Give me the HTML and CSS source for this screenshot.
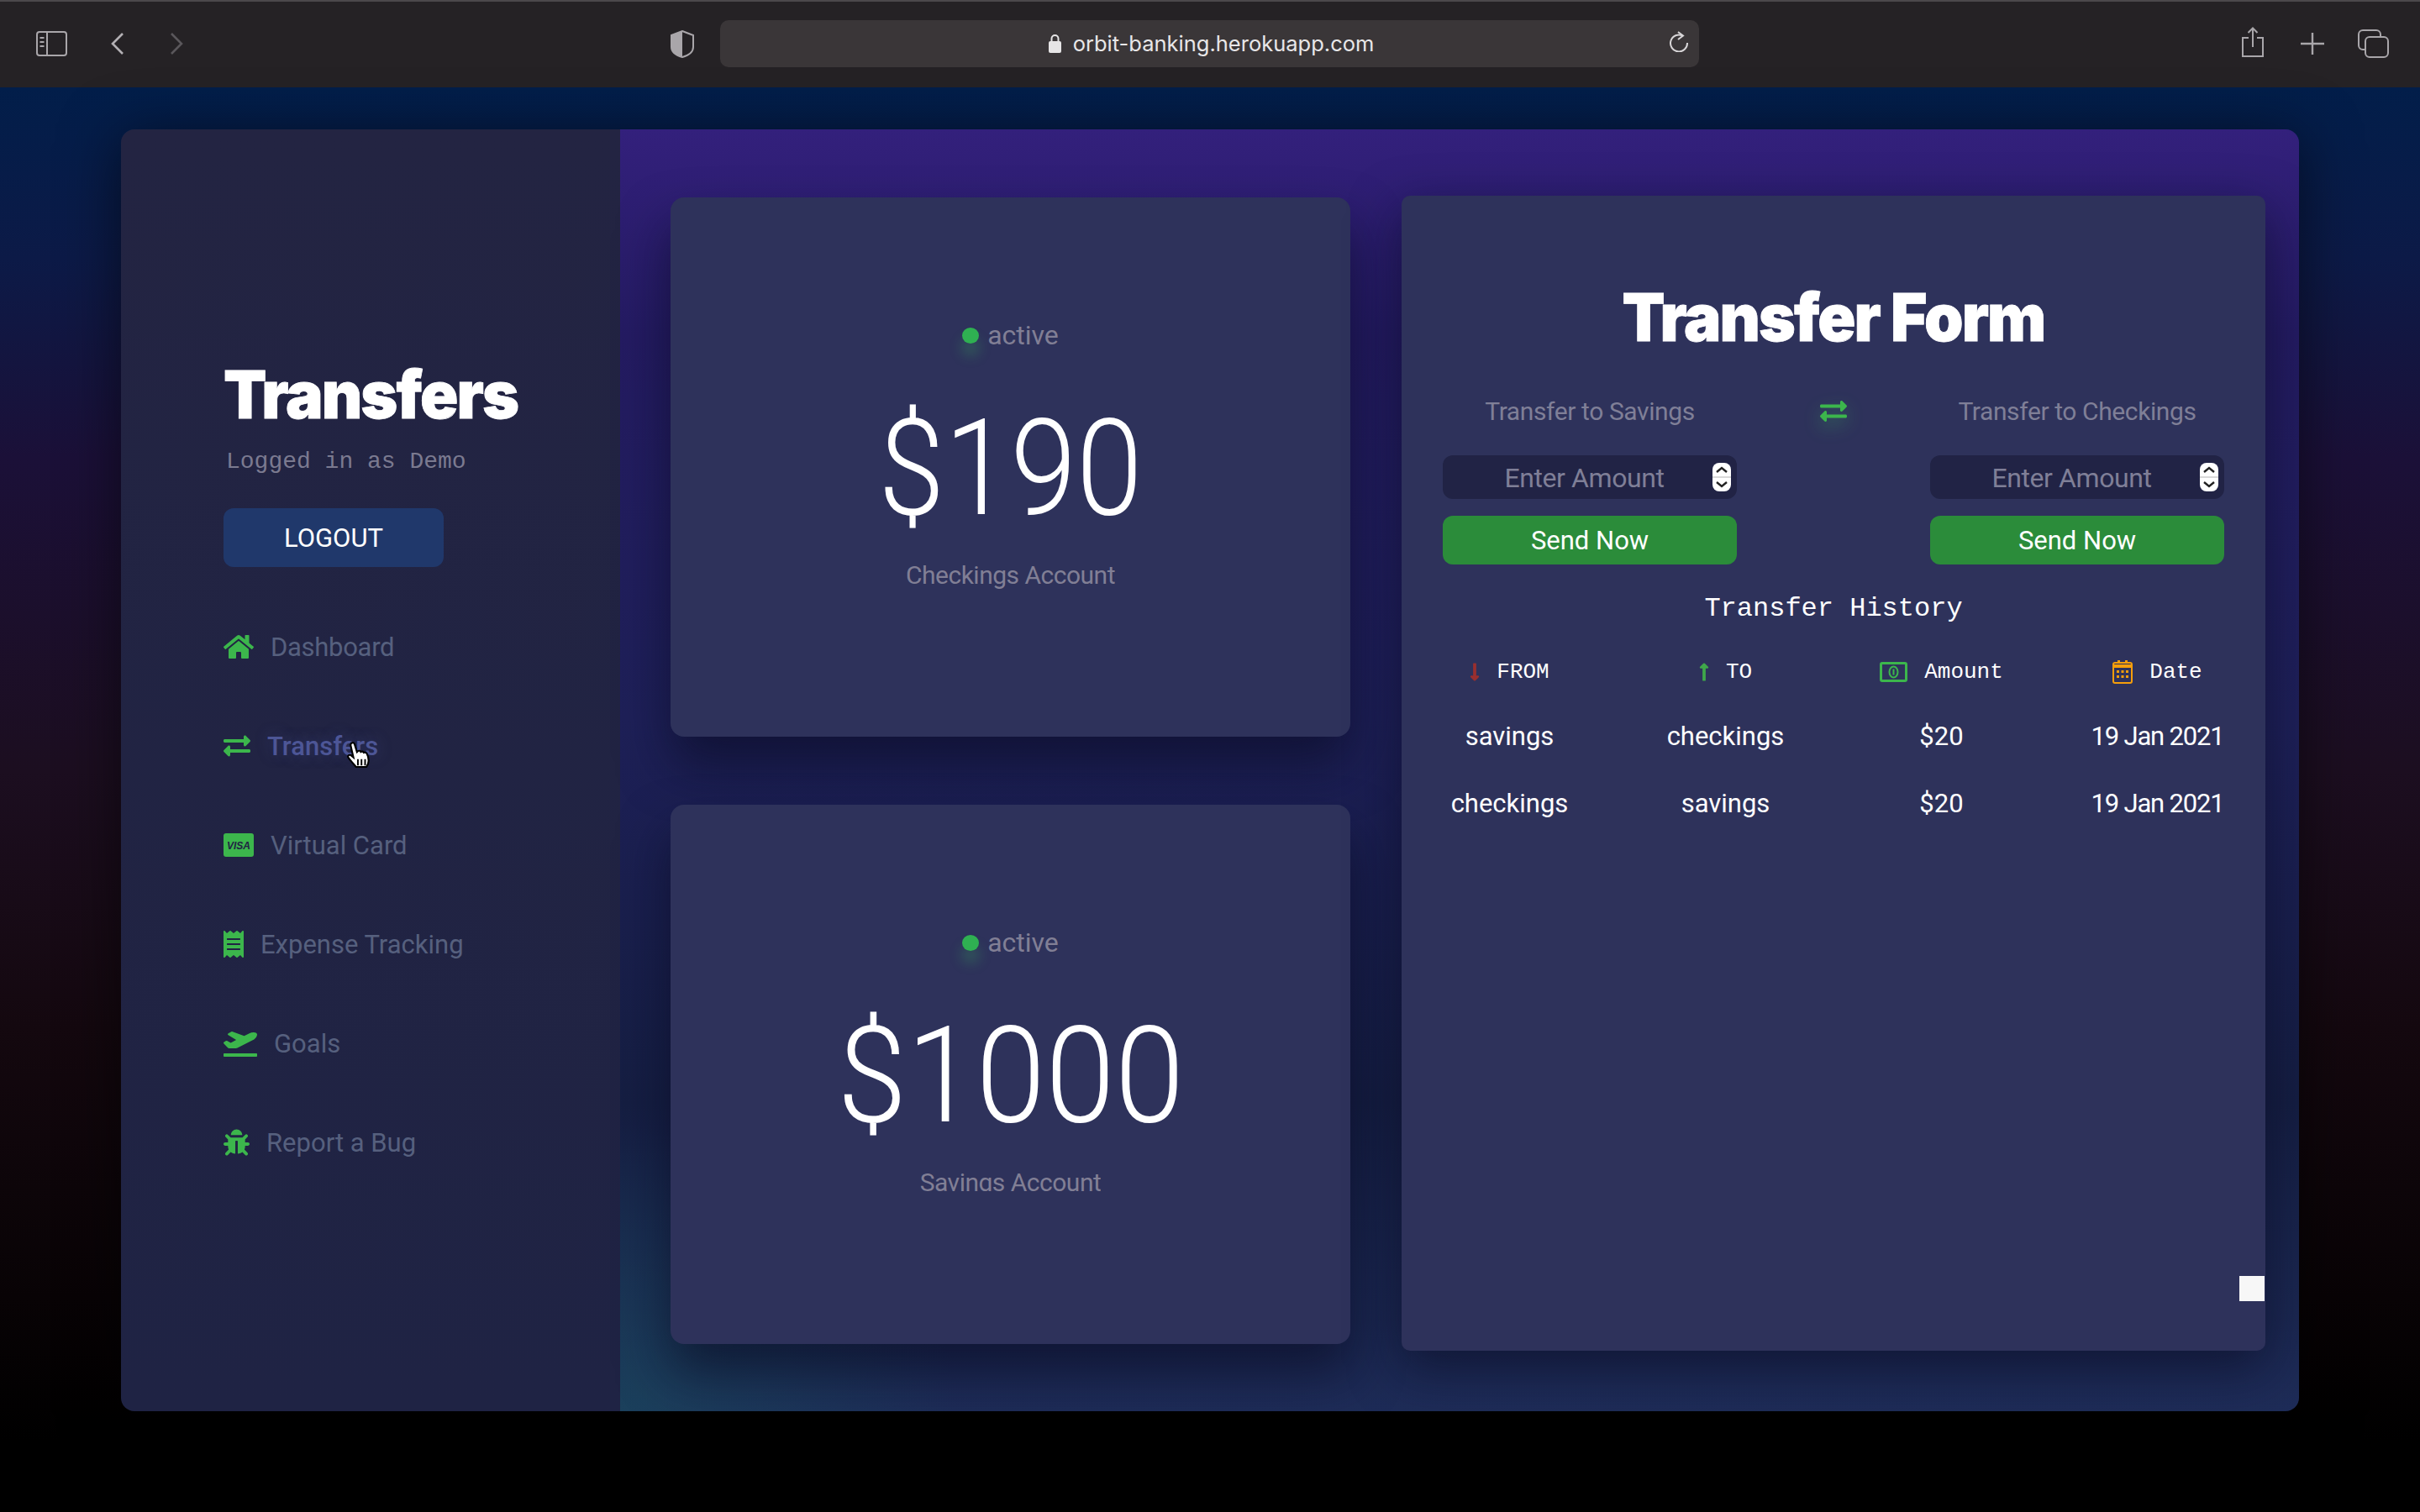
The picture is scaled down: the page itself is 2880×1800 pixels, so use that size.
FILE: index.html
```html
<!DOCTYPE html>
<html lang="en">
<head>
  <meta charset="UTF-8">
  <meta name="viewport" content="width=device-width, initial-scale=1.0">
  <title>Transfers</title>
  <link rel="stylesheet" href="styles.css">
</head>
<body>
  <header class="toolbar">
    <svg class="tb-sidebar" viewBox="0 0 37 30"><rect x="1" y="1" width="35" height="28" rx="3" fill="none" stroke="#a9a6aa" stroke-width="2"/><path d="M13 1v28" stroke="#a9a6aa" stroke-width="2"/><path d="M4.500 8h5M4.500 13h5M4.500 18h5" stroke="#a9a6aa" stroke-width="2"/></svg>
    <svg class="tb-back" viewBox="0 0 17 28"><path d="M15 2 3 14l12 12" fill="none" stroke="#b3b0b4" stroke-width="2.600"/></svg>
    <svg class="tb-forward" viewBox="0 0 17 28"><path d="m2 2 12 12L2 26" fill="none" stroke="#5a575b" stroke-width="2.600"/></svg>
    <svg class="tb-shield" viewBox="0 0 28 33"><path d="M14 1 27 6v14c0 6-6 10-13 12C7 30 1 26 1 20V6z" fill="none" stroke="#a9a6aa" stroke-width="2"/><path d="M14 1v31C7 30 1 26 1 20V6z" fill="#a9a6aa"/></svg>
    <div class="address">
      <span class="address-text">
        <svg class="tb-lock" viewBox="0 0 15 23"><path d="M3.500 10V6a4 4 0 0 1 8 0v4" fill="none" stroke="#e6e5e6" stroke-width="2"/><rect y="9" width="15" height="14" rx="2" fill="#e6e5e6"/></svg>
        orbit-banking.herokuapp.com
      </span>
      <svg class="tb-reload" viewBox="0 0 24 25"><path d="M16.500 5.500A10 10 0 1 0 22 14" fill="none" stroke="#d8d6d8" stroke-width="2"/><path d="m11 1 6 4.500-6 4.500" fill="none" stroke="#d8d6d8" stroke-width="2"/></svg>
    </div>
    <div class="tb-right">
      <svg class="tb-share" viewBox="0 0 28 37"><path d="M9 13H2v22h24V13h-7" fill="none" stroke="#a9a6aa" stroke-width="2"/><path d="M14 24V2M8.500 7 14 1.500 19.500 7" fill="none" stroke="#a9a6aa" stroke-width="2"/></svg>
      <svg class="tb-plus" viewBox="0 0 28 26"><path d="M14 0v26M0 13h28" stroke="#a9a6aa" stroke-width="2.400"/></svg>
      <svg class="tb-tabs" viewBox="0 0 37 34"><rect x="1" y="1" width="26" height="23" rx="5" fill="none" stroke="#a9a6aa" stroke-width="2"/><rect x="9" y="9" width="27" height="24" rx="5" fill="#252225" stroke="#a9a6aa" stroke-width="2"/></svg>
    </div>
  </header>

  <div class="page">
    <div class="app">
      <aside class="sidebar">
        <h1 class="side-title">Transfers</h1>
        <p class="logged">Logged in as Demo</p>
        <button class="logout">LOGOUT</button>
        <nav class="nav">
          <a class="nav-item">
            <svg class="nav-icon ic-home" viewBox="0 0 576 512"><path d="M280.370 148.260L96 300.110V464a16 16 0 0 0 16 16l112.060-.29a16 16 0 0 0 15.920-16V368a16 16 0 0 1 16-16h64a16 16 0 0 1 16 16v95.640a16 16 0 0 0 16 16.050L464 480a16 16 0 0 0 16-16V300L295.670 148.260a12.190 12.190 0 0 0-15.300 0zM571.600 251.470L488 182.560V44.050a12 12 0 0 0-12-12h-56a12 12 0 0 0-12 12v72.610L318.470 43a48 48 0 0 0-61 0L4.340 251.470a12 12 0 0 0-1.600 16.900l25.500 31A12 12 0 0 0 45.150 301l235.220-193.740a12.190 12.190 0 0 1 15.300 0L530.900 301a12 12 0 0 0 16.900-1.600l25.500-31a12 12 0 0 0-1.700-16.930z"/></svg>
            <span class="nav-tight">Dashboard</span>
          </a>
          <a class="nav-item is-active">
            <svg class="nav-icon ic-swap" viewBox="0 0 512 512"><path d="M0 168v-16c0-13.255 10.745-24 24-24h360V80c0-21.367 25.899-32.042 40.971-16.971l80 80c9.372 9.373 9.372 24.569 0 33.941l-80 80C409.956 271.982 384 261.456 384 240v-48H24c-13.255 0-24-10.745-24-24zm488 152H128v-48c0-21.314-25.862-32.080-40.971-16.971l-80 80c-9.372 9.373-9.372 24.569 0 33.941l80 80C102.057 463.997 128 453.437 128 432v-48h360c13.255 0 24-10.745 24-24v-16c0-13.255-10.745-24-24-24z"/></svg>
            Transfers
            <svg class="hand" viewBox="0 0 28 31"><path d="M6 2c1.500-1 3 0 3.400 1.500L12 12l1-1c1.500-.8 2.700-.3 3.200.8 1.200-.8 2.700-.4 3.200.8 1.400-.6 2.800-.2 3.500 1 1 1.800 2 5 2 8 0 3-1 5-2.500 7H11c-1.500-2-3-3.500-5.500-6.500C4 20.500 2 18.500 2 17c0-1.500 1.500-2 3-1.500l3 2.500L5 5c-.3-1.200 0-2.400 1-3z" fill="#fff" stroke="#000" stroke-width="2"/><path d="M13 20v7M17 20v7M21 20v7" stroke="#000" stroke-width="1.800"/></svg>
          </a>
          <a class="nav-item">
            <svg class="nav-icon ic-visa" viewBox="0 0 36 28"><rect width="36" height="28" rx="3" fill="currentColor"/><text class="visa-text" x="18" y="19">VISA</text></svg>
            Virtual Card
          </a>
          <a class="nav-item">
            <svg class="nav-icon ic-receipt" viewBox="0 0 384 512"><path d="M358.400 3.200L320 48 265.600 3.200a15.900 15.900 0 0 0-19.200 0L192 48 137.600 3.200a15.900 15.900 0 0 0-19.200 0L64 48 25.600 3.200C15-4.700 0 2.800 0 16v480c0 13.200 15 20.700 25.600 12.800L64 464l54.400 44.800a15.900 15.900 0 0 0 19.200 0L192 464l54.400 44.800a15.900 15.900 0 0 0 19.200 0L320 464l38.400 44.800c10.500 7.900 25.600.4 25.600-12.800V16c0-13.200-15-20.700-25.600-12.800zM320 360c0 4.400-3.600 8-8 8H72c-4.400 0-8-3.600-8-8v-16c0-4.400 3.600-8 8-8h240c4.400 0 8 3.600 8 8v16zm0-96c0 4.400-3.600 8-8 8H72c-4.400 0-8-3.600-8-8v-16c0-4.400 3.600-8 8-8h240c4.400 0 8 3.600 8 8v16zm0-96c0 4.400-3.600 8-8 8H72c-4.400 0-8-3.600-8-8v-16c0-4.400 3.600-8 8-8h240c4.400 0 8 3.600 8 8v16z"/></svg>
            Expense Tracking
          </a>
          <a class="nav-item">
            <svg class="nav-icon ic-plane" viewBox="0 0 640 512"><path d="M624 448H16c-8.840 0-16 7.160-16 16v32c0 8.840 7.160 16 16 16h608c8.840 0 16-7.160 16-16v-32c0-8.840-7.160-16-16-16zM80.550 341.270c6.280 6.840 15.100 10.720 24.330 10.710l130.540-.18a65.620 65.620 0 0 0 29.640-7.120l290.960-147.650c26.740-13.570 50.710-32.940 67.020-58.310 18.310-28.480 20.300-49.090 13.070-63.650-7.210-14.570-24.740-25.270-58.250-27.450-29.850-1.940-59.540 5.920-86.280 19.480l-98.510 49.990-218.700-82.060a17.799 17.799 0 0 0-18-1.110L90.620 67.290c-10.670 5.410-13.250 19.650-5.170 28.530l156.220 98.100-103.210 52.380-72.350-36.470a17.804 17.804 0 0 0-16.070.02L9.910 230.220c-10.440 5.300-13.190 19.120-5.570 28.080l76.210 82.970z"/></svg>
            Goals
          </a>
          <a class="nav-item">
            <svg class="nav-icon ic-bug" viewBox="0 0 512 512"><path d="M511.988 288.900c-.478 17.430-15.217 31.100-32.653 31.100H424v16c0 21.864-4.882 42.584-13.600 61.145l60.228 60.228c12.496 12.497 12.496 32.758 0 45.255-12.498 12.497-32.759 12.496-45.256 0l-54.736-54.736C345.886 467.965 314.351 480 280 480V236c0-6.627-5.373-12-12-12h-24c-6.627 0-12 5.373-12 12v244c-34.351 0-65.886-12.035-90.636-32.108l-54.736 54.736c-12.498 12.497-32.759 12.496-45.256 0-12.496-12.497-12.496-32.758 0-45.255l60.228-60.228C92.882 378.584 88 357.864 88 336v-16H32.666C15.230 320 .491 306.330.013 288.900-.484 270.816 14.028 256 32 256h56v-58.745l-46.628-46.628c-12.496-12.497-12.496-32.758 0-45.255 12.498-12.497 32.758-12.497 45.256 0L141.255 160h229.489l54.627-54.627c12.498-12.497 32.758-12.497 45.256 0 12.496 12.497 12.496 32.758 0 45.255L424 197.255V256h56c17.972 0 32.484 14.816 31.988 32.900zM257 0c-61.856 0-112 50.144-112 112h224C369 50.144 318.856 0 257 0z"/></svg>
            Report a Bug
          </a>
        </nav>
      </aside>

      <main class="main">
        <section class="accounts">
          <div class="card">
            <div class="status"><span class="dot"></span>active</div>
            <div class="balance">$190</div>
            <div class="acct-name">Checkings Account</div>
          </div>
          <div class="card">
            <div class="status"><span class="dot"></span>active</div>
            <div class="balance balance-wide">$1000</div>
            <div class="acct-name acct-name-cut">Savings Account</div>
          </div>
        </section>

        <section class="form-panel">
          <h2 class="form-title">Transfer Form</h2>
          <div class="transfer-row">
            <div class="transfer-col">
              <div class="transfer-label">Transfer to Savings</div>
              <div class="amount-input">
                <span class="placeholder">Enter Amount</span>
                <span class="spinner"><svg viewBox="0 0 22 34"><path d="m5 11 6-5 6 5M5 23l6 5 6-5" fill="none" stroke="#222" stroke-width="2.400"/><path d="M0 17h22" stroke="#ccc" stroke-width="1.500"/></svg></span>
              </div>
              <button class="send">Send Now</button>
            </div>
            <svg class="swap" viewBox="0 0 512 400"><path d="M0 112V96c0-13.255 10.745-24 24-24h360V24c0-21.367 25.899-32.042 40.971-16.971l80 80c9.372 9.373 9.372 24.569 0 33.941l-80 80C409.956 215.982 384 205.456 384 184v-48H24c-13.255 0-24-10.745-24-24zm488 152H128v-48c0-21.314-25.862-32.080-40.971-16.971l-80 80c-9.372 9.373-9.372 24.569 0 33.941l80 80C102.057 407.997 128 397.437 128 376v-48h360c13.255 0 24-10.745 24-24v-16c0-13.255-10.745-24-24-24z"/></svg>
            <div class="transfer-col">
              <div class="transfer-label">Transfer to Checkings</div>
              <div class="amount-input">
                <span class="placeholder">Enter Amount</span>
                <span class="spinner"><svg viewBox="0 0 22 34"><path d="m5 11 6-5 6 5M5 23l6 5 6-5" fill="none" stroke="#222" stroke-width="2.400"/><path d="M0 17h22" stroke="#ccc" stroke-width="1.500"/></svg></span>
              </div>
              <button class="send">Send Now</button>
            </div>
          </div>

          <h3 class="history-title">Transfer History</h3>
          <div class="history">
            <div class="th">
              <svg class="th-arrow th-red" viewBox="0 0 256 512" preserveAspectRatio="none"><path d="M168 345.941V44c0-6.627-5.373-12-12-12h-56c-6.627 0-12 5.373-12 12v301.941H41.941c-21.382 0-32.090 25.851-16.971 40.971l86.059 86.059c9.373 9.373 24.569 9.373 33.941 0l86.059-86.059c15.119-15.119 4.411-40.971-16.971-40.971H168z"/></svg>
              FROM
            </div>
            <div class="th">
              <svg class="th-arrow th-green" viewBox="0 0 256 512" preserveAspectRatio="none"><path d="M88 166.059V468c0 6.627 5.373 12 12 12h56c6.627 0 12-5.373 12-12V166.059h46.059c21.382 0 32.090-25.851 16.971-40.971l-86.059-86.059c-9.373-9.373-24.569-9.373-33.941 0l-86.059 86.059c-15.119 15.119-4.411 40.971 16.971 40.971H88z"/></svg>
              TO
            </div>
            <div class="th">
              <svg class="th-money" viewBox="0 0 33 24"><rect x="1.500" y="1.500" width="30" height="21" rx="1.500" fill="none" stroke="currentColor" stroke-width="3"/><ellipse cx="16.500" cy="12" rx="5" ry="6.500" fill="none" stroke="currentColor" stroke-width="2"/><path d="M16.500 8.500v7" stroke="currentColor" stroke-width="2"/></svg>
              Amount
            </div>
            <div class="th">
              <svg class="th-cal" viewBox="0 0 24 28"><path d="M6 0h3v4H6zM15 0h3v4h-3z" fill="currentColor"/><rect x="1" y="3" width="22" height="24" rx="2" fill="none" stroke="currentColor" stroke-width="2"/><path d="M1 5h22v4H1z" fill="currentColor"/><path d="M5 12h3v3H5zM10.500 12h3v3h-3zM16 12h3v3h-3zM5 18h3v3H5zM10.500 18h3v3h-3zM16 18h3v3h-3z" fill="currentColor"/></svg>
              Date
            </div>
            <div class="td">savings</div><div class="td">checkings</div><div class="td">$20</div><div class="td td-date">19 Jan 2021</div>
            <div class="td">checkings</div><div class="td">savings</div><div class="td">$20</div><div class="td td-date">19 Jan 2021</div>
          </div>
          <div class="chat-square"></div>
        </section>
      </main>
    </div>
  </div>
</body>
</html>
```

FILE: styles.css
```css
* {
  box-sizing: border-box;
}
html, body {
  margin: 0;
  height: 100%;
}
body {
  display: flex;
  flex-direction: column;
  font-family: Roboto, "Liberation Sans", sans-serif;
  background: #000;
  overflow: hidden;
}

/* browser bar */
.toolbar {
  height: 104px;
  flex: none;
  display: flex;
  align-items: center;
  padding: 0 0 2px 43px;
  background: #252225;
  border-top: 2px solid #4b484b;
}
.toolbar svg {
  display: block;
  flex: none;
}
.tb-sidebar { width: 37px; height: 30px; }
.tb-back { width: 17px; height: 28px; margin-left: 51px; }
.tb-forward { width: 17px; height: 28px; margin-left: 54px; }
.tb-shield { width: 28px; height: 33px; margin-left: 579px; }
.address {
  width: 1165px;
  height: 56px;
  margin-left: 31px;
  position: relative;
  display: flex;
  align-items: center;
  justify-content: center;
  background: #3a3638;
  border-radius: 10px;
}
.address-text {
  display: flex;
  align-items: center;
  gap: 14px;
  color: #e8e7e8;
  font-family: Inter, sans-serif;
  font-size: 25.500px;
  margin: 0 0 2px 4px;
}
.toolbar .tb-lock { width: 15px; height: 23px; }
.toolbar .tb-reload {
  width: 24px;
  height: 25px;
  position: absolute;
  right: 12px;
  top: 13px;
}
.tb-right {
  display: flex;
  align-items: center;
  margin-left: 645px;
}
.tb-share { width: 28px; height: 37px; margin-top: -4px; }
.tb-plus { width: 28px; height: 26px; margin-left: 43px; }
.tb-tabs { width: 37px; height: 34px; margin-left: 40px; }

/* page */
.page {
  flex: 1;
  padding: 50px 144px 120px;
  background: linear-gradient(to bottom, #021e4a 0, #0c1a47 12%, #1b1038 26%, #1c0e20 48%, #14080f 66%, #080305 85%, #000 95%);
}
.app {
  height: 100%;
  display: flex;
  border-radius: 16px;
  overflow: hidden;
  box-shadow: 0 10px 70px rgba(0, 0, 0, 0.55);
}

/* sidebar */
.sidebar {
  width: 594px;
  flex: none;
  padding: 271px 0 0 122px;
  background: linear-gradient(to bottom, #232442, #1f2344);
}
.side-title {
  margin: 0;
  color: #fff;
  font-family: Inter, sans-serif;
  font-weight: 900;
  font-size: 78px;
  line-height: 90px;
  letter-spacing: -2px;
  -webkit-text-stroke: 0.800px #fff;
  transform: scaleX(0.96);
  transform-origin: left center;
}
.logged {
  margin: 15px 0 0 3px;
  color: #7b7a90;
  font-family: "Liberation Mono", monospace;
  font-size: 28px;
  line-height: 40px;
}
.logout {
  display: block;
  width: 262px;
  height: 70px;
  margin-top: 35px;
  border: 0;
  border-radius: 12px;
  background: #20386b;
  color: #fff;
  font-family: Roboto, sans-serif;
  font-size: 31px;
}
.nav {
  margin-top: 36px;
}
.nav-item {
  display: flex;
  align-items: center;
  height: 118px;
  gap: 20px;
  color: #56607e;
  font-size: 31px;
  position: relative;
}
.nav-tight {
  letter-spacing: -0.300px;
}
.nav-icon {
  flex: none;
  fill: #3cb64c;
  color: #3cb64c;
}
.is-active {
  color: #4d5696;
  font-weight: 500;
  text-shadow: 0 0 18px rgba(90, 100, 180, 0.35);
}
.ic-home { width: 36px; height: 32px; }
.ic-swap { width: 32px; height: 32px; }
.ic-visa { width: 36px; height: 28px; }
.ic-receipt { width: 24px; height: 32px; }
.ic-plane { width: 40px; height: 32px; }
.ic-bug { width: 31px; height: 32px; }
.visa-text {
  fill: #202343;
  font-family: "Liberation Sans", sans-serif;
  font-weight: 700;
  font-style: italic;
  font-size: 12px;
  text-anchor: middle;
}
.hand {
  position: absolute;
  left: 146px;
  top: 53px;
  width: 30px;
  height: 34px;
}

/* main area */
.main {
  flex: 1;
  display: flex;
  align-items: flex-start;
  padding: 81px 0 0 60px;
  background:
    radial-gradient(ellipse 400px 340px at 0 100%, rgba(24, 84, 96, 0.5), rgba(24, 84, 96, 0) 100%),
    linear-gradient(to bottom, #33207c 0, #241b62 16%, #1e2058 46%, #151e42 76%, #1e2c58 100%);
}
.accounts {
  width: 809px;
  flex: none;
  display: flex;
  flex-direction: column;
  gap: 81px;
}
.card {
  height: 642px;
  padding-top: 144px;
  display: flex;
  flex-direction: column;
  align-items: center;
  background: #2e325b;
  border-radius: 16px;
  box-shadow: 0 34px 60px rgba(8, 10, 34, 0.6);
}
.status {
  display: flex;
  align-items: center;
  gap: 10px;
  height: 40px;
  color: #817f95;
  font-size: 32px;
}
.dot {
  width: 20px;
  height: 19px;
  border-radius: 50%;
  background: #2fb052;
  box-shadow: 0 14px 16px rgba(60, 200, 90, 0.3);
}
.balance {
  margin-top: 59px;
  height: 160px;
  color: #fff;
  font-weight: 300;
  font-size: 160px;
  line-height: 160px;
  transform: scaleX(0.885);
}
.balance-wide {
  transform: scaleX(0.93);
}
.acct-name {
  margin-top: 27px;
  height: 40px;
  color: #817f95;
  font-size: 30px;
  line-height: 40px;
  letter-spacing: -0.500px;
  overflow: hidden;
}
.acct-name-cut {
  height: 30px;
}

/* transfer form */
.form-panel {
  position: relative;
  width: 1028px;
  height: 1375px;
  flex: none;
  margin: -2px 0 0 61px;
  padding-top: 100px;
  background: #2e325b;
  border-radius: 10px;
  box-shadow: 0 20px 60px rgba(8, 10, 34, 0.6);
}
.form-title {
  margin: 0;
  color: #fff;
  text-align: center;
  font-family: Inter, sans-serif;
  font-weight: 900;
  font-size: 78px;
  line-height: 90px;
  letter-spacing: -2px;
  -webkit-text-stroke: 0.800px #fff;
  transform: scaleX(0.955);
}
.transfer-row {
  display: flex;
  justify-content: space-between;
  margin-top: 47px;
  padding: 0 49px;
}
.transfer-col {
  width: 350px;
}
.transfer-label {
  height: 40px;
  color: #7f7f97;
  font-size: 30px;
  line-height: 40px;
  letter-spacing: -0.400px;
  text-align: center;
}
.amount-input {
  display: flex;
  align-items: center;
  height: 52px;
  margin-top: 32px;
  padding: 0 7px 0 0;
  background: #212345;
  border-radius: 12px;
}
.placeholder {
  flex: 1;
  padding: 2px 0 0 16px;
  text-align: center;
  color: #7f7f97;
  font-size: 32px;
  letter-spacing: -0.400px;
}
.spinner {
  width: 22px;
  height: 34px;
  background: #fff;
  border-radius: 8px;
  overflow: hidden;
}
.spinner svg {
  display: block;
}
.send {
  display: block;
  width: 100%;
  height: 58px;
  margin-top: 20px;
  border: 0;
  border-radius: 12px;
  background: #2b8c3a;
  color: #fff;
  font-family: Roboto, sans-serif;
  font-size: 31px;
}
.swap {
  flex: none;
  width: 32px;
  height: 25px;
  margin-top: 7px;
  fill: #3cb64c;
  filter: drop-shadow(0 8px 10px rgba(60, 200, 90, 0.4));
}
.history-title {
  margin: 33px 0 0;
  color: #fff;
  text-align: center;
  font-family: "Liberation Mono", monospace;
  font-weight: 400;
  font-size: 32px;
  line-height: 40px;
}
.history {
  display: grid;
  grid-template-columns: repeat(4, 257px);
  grid-template-rows: 72px 80px 80px;
  margin-top: 19px;
}
.th, .td {
  display: flex;
  align-items: center;
  justify-content: center;
  color: #fff;
}
.th {
  gap: 20px;
  font-family: "Liberation Mono", monospace;
  font-size: 26px;
}
.td {
  font-size: 31px;
}
.td-date {
  letter-spacing: -1.200px;
}
.th-arrow {
  width: 12px;
  height: 24px;
}
.th-red { fill: #9a2f2f; }
.th-green { fill: #3fa84a; }
.th-money {
  width: 33px;
  height: 24px;
  color: #3cb64c;
}
.th-cal {
  width: 24px;
  height: 28px;
  color: #f59e0b;
}
.chat-square {
  position: absolute;
  right: 1px;
  bottom: 59px;
  width: 30px;
  height: 30px;
  background: #f7f7f7;
}
```
